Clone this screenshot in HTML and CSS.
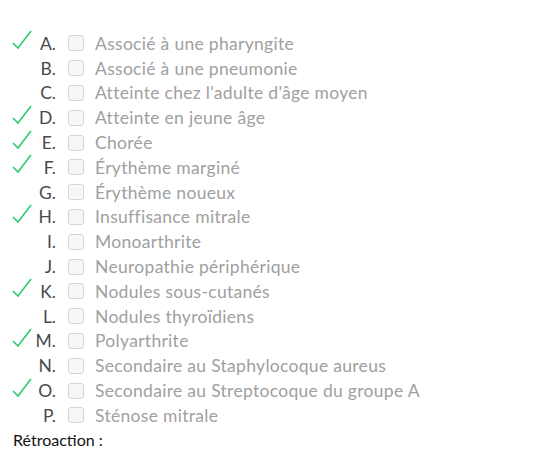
FILE: index.html
```html
<!DOCTYPE html>
<html lang="fr">
<head>
  <meta charset="UTF-8">
  <title>Question</title>
  <link rel="stylesheet" href="styles.css">
</head>
<body>
  <ul class="choices">
    <li class="choice correct"><span class="mark"><svg viewBox="0 0 20 20"><polyline points="1,13 6,18 19,1"/></svg></span><span class="letter">A.</span><span class="box"></span><span class="label">Associé à une pharyngite</span></li>
    <li class="choice"><span class="mark"></span><span class="letter">B.</span><span class="box"></span><span class="label">Associé à une pneumonie</span></li>
    <li class="choice"><span class="mark"></span><span class="letter">C.</span><span class="box"></span><span class="label">Atteinte chez l'adulte d'âge moyen</span></li>
    <li class="choice correct"><span class="mark"><svg viewBox="0 0 20 20"><polyline points="1,13 6,18 19,1"/></svg></span><span class="letter">D.</span><span class="box"></span><span class="label">Atteinte en jeune âge</span></li>
    <li class="choice correct"><span class="mark"><svg viewBox="0 0 20 20"><polyline points="1,13 6,18 19,1"/></svg></span><span class="letter">E.</span><span class="box"></span><span class="label">Chorée</span></li>
    <li class="choice correct"><span class="mark"><svg viewBox="0 0 20 20"><polyline points="1,13 6,18 19,1"/></svg></span><span class="letter">F.</span><span class="box"></span><span class="label">Érythème marginé</span></li>
    <li class="choice"><span class="mark"></span><span class="letter">G.</span><span class="box"></span><span class="label">Érythème noueux</span></li>
    <li class="choice correct"><span class="mark"><svg viewBox="0 0 20 20"><polyline points="1,13 6,18 19,1"/></svg></span><span class="letter">H.</span><span class="box"></span><span class="label">Insuffisance mitrale</span></li>
    <li class="choice"><span class="mark"></span><span class="letter">I.</span><span class="box"></span><span class="label">Monoarthrite</span></li>
    <li class="choice"><span class="mark"></span><span class="letter">J.</span><span class="box"></span><span class="label">Neuropathie périphérique</span></li>
    <li class="choice correct"><span class="mark"><svg viewBox="0 0 20 20"><polyline points="1,13 6,18 19,1"/></svg></span><span class="letter">K.</span><span class="box"></span><span class="label">Nodules sous-cutanés</span></li>
    <li class="choice"><span class="mark"></span><span class="letter">L.</span><span class="box"></span><span class="label">Nodules thyroïdiens</span></li>
    <li class="choice correct"><span class="mark"><svg viewBox="0 0 20 20"><polyline points="1,13 6,18 19,1"/></svg></span><span class="letter">M.</span><span class="box"></span><span class="label">Polyarthrite</span></li>
    <li class="choice"><span class="mark"></span><span class="letter">N.</span><span class="box"></span><span class="label">Secondaire au Staphylocoque aureus</span></li>
    <li class="choice correct"><span class="mark"><svg viewBox="0 0 20 20"><polyline points="1,13 6,18 19,1"/></svg></span><span class="letter">O.</span><span class="box"></span><span class="label">Secondaire au Streptocoque du groupe A</span></li>
    <li class="choice"><span class="mark"></span><span class="letter">P.</span><span class="box"></span><span class="label">Sténose mitrale</span></li>
  </ul>
  <div class="feedback">Rétroaction :</div>
</body>
</html>
```

FILE: styles.css
```css
body {
  margin: 0;
  background: #fff;
  font-family: Lato, "Open Sans", sans-serif;
}

.choices {
  list-style: none;
  margin: 0;
  padding: 31px 0 0 12px;
}

.choice {
  display: flex;
  align-items: center;
  height: 24.8px;
  font-size: 17.5px;
  letter-spacing: 0.3px;
}

.mark {
  width: 20px;
  height: 20px;
  margin-top: -6px;
}

.mark svg {
  display: block;
  width: 20px;
  height: 20px;
  fill: none;
  stroke: #2ccb6d;
  stroke-width: 1.6;
}

.letter {
  width: 24px;
  text-align: right;
  color: #4a4a4a;
  letter-spacing: 0;
}

.box {
  width: 14px;
  height: 14px;
  margin-left: 12px;
  border: 1px solid #d6d6d6;
  border-radius: 3px;
  background: #f6f6f6;
}

.label {
  margin-left: 11px;
  color: #a0a0a0;
}

.feedback {
  margin: 5px 0 0 13px;
  font-size: 16px;
  line-height: 14px;
  color: #111;
}
```
